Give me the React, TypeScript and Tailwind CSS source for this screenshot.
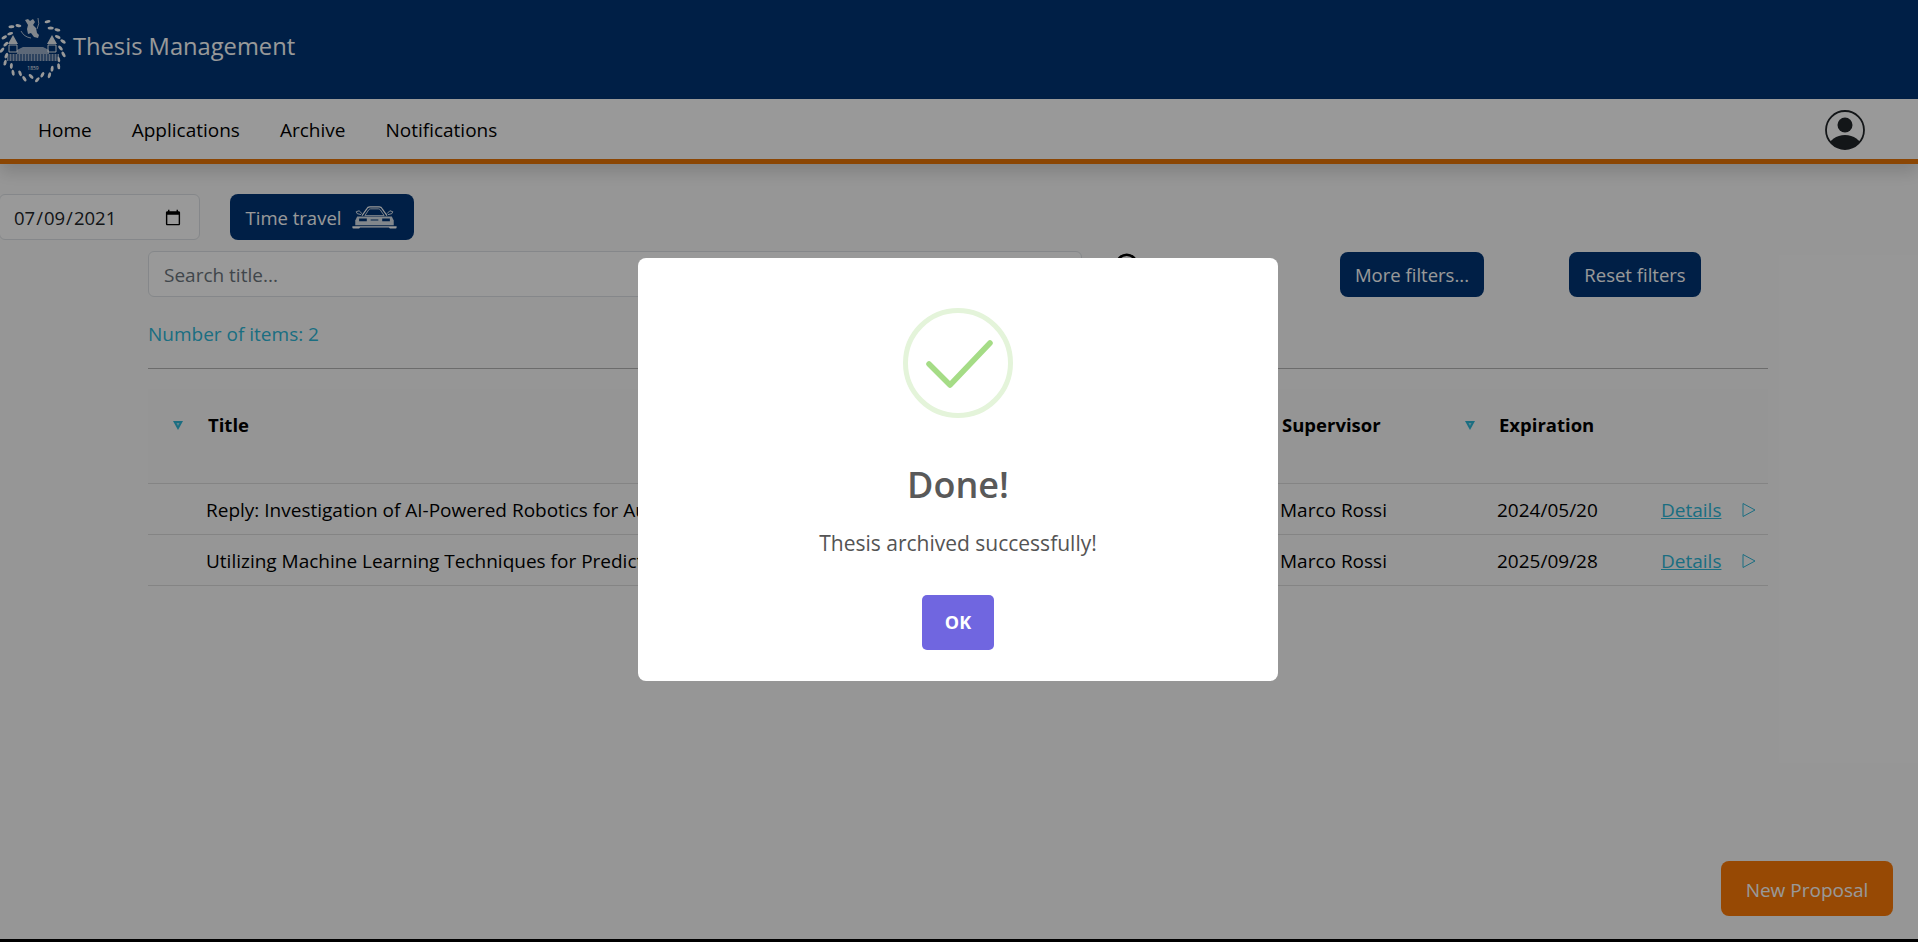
import { Search } from 'lucide-react';

const font = "font-['Open_Sans','Noto_Sans',sans-serif]";

function Logo() {
  // laurel wreath leaves around the seal
  const leaves = [];
  for (let a = -62; a <= 242; a += 12) {
    const r = (a * Math.PI) / 180;
    const side = (a + 62) % 24 === 0 ? 31 : 27.5;
    const tilt = a < 90 ? a + 50 : a - 50;
    const x = 33 + side * Math.cos(r);
    const y = 32 + side * Math.sin(r);
    leaves.push(
      <ellipse key={a} cx={x} cy={y} rx="3" ry="1.5" fill="#fff" transform={`rotate(${tilt} ${x} ${y})`} />
    );
  }
  return (
    <svg viewBox="0 0 66 66" className="w-[66px] h-[66px] shrink-0">
      {leaves}
      <path d="M25 3l3-1 2 2 3-2 2 3-2 3 3 3 1 5 2 2-1 3-4-1-3-4-3 1-1-5 1-4z" fill="#fff" opacity=".85" />
      <path d="M38 1q2 6-1 11M21 14q3 6 10 7" fill="none" stroke="#fff" strokeWidth=".7" />
      <path d="M8 27l5-9 5 9zM47 27l5-9 5 9z" fill="#fff" opacity=".9" />
      <path d="M9 28h8v7H9zM48 28h8v7h-8z" fill="none" stroke="#fff" strokeWidth=".9" />
      <path d="M17 33l6-3h20l6 3v4H17z" fill="#fff" opacity=".6" />
      <path d="M7 37h52v7H7z" fill="#fff" opacity=".6" />
      <path d="M9 37v7M12 37v7M15 37v7M18 37v7M21 37v7M24 37v7M27 37v7M30 37v7M33 37v7M36 37v7M39 37v7M42 37v7M45 37v7M48 37v7M51 37v7M54 37v7M57 37v7" stroke="#003576" strokeWidth="1" />
      <text x="33" y="53" textAnchor="middle" fontSize="5" fill="#fff">1859</text>
    </svg>
  );
}

function Car() {
  return (
    <svg viewBox="0 0 48 26" className="w-[47px] h-[25px] shrink-0" fill="none" stroke="#fff" strokeWidth="1.2">
      <path d="M11 11l5-7q1-2 3-2h10q2 0 3 2l5 7" />
      <path d="M14 11l4-6q1-1 2-1h8q1 0 2 1l4 6z" strokeWidth=".8" />
      <path d="M10 10l-4-1-1-2 3-1 3 3M38 10l4-1 1-2-3-1-3 3" strokeWidth=".9" />
      <path d="M6 12h36l2 4v5H4v-5z" fill="#fff" stroke="none" opacity=".85" />
      <path d="M8 14h8v3H8zM32 14h8v3h-8zM20 15h8v1h-8z" fill="#003576" stroke="none" />
      <path d="M1 22h46v1.5q0 1-1 1H40l-1-1H9l-1 1H2q-1 0-1-1z" fill="#fff" stroke="none" />
    </svg>
  );
}

function SortArrow() {
  return (
    <svg viewBox="0 0 10 10" className="w-[10px] h-[10px]">
      <path d="M0 1h10L5 10z" fill="#2db7d8" />
      <path d="M3.5 3h3L5 6z" fill="#a7dcea" />
    </svg>
  );
}

function Row({ title, date }: { title: string; date: string }) {
  return (
    <tr className="h-[51px] border-b border-[#dcdcdc] text-[19px] text-black">
      <td />
      <td className="pt-[3px] whitespace-nowrap">{title}</td>
      <td className="pt-[3px]">Marco Rossi</td>
      <td className="pt-[3px]">{date}</td>
      <td className="pt-[3px]">
        <div className="flex items-center pl-[2px]">
          <a className="text-[#2db7d8] underline">Details</a>
          <svg viewBox="0 0 14 16" className="ml-[21px] w-[14px] h-[16px]" fill="none" stroke="#2db7d8" strokeWidth="1">
            <path d="M1 1.5l12 6.5-12 6.5z" />
          </svg>
        </div>
      </td>
    </tr>
  );
}

export default function App() {
  return (
    <div className={`relative h-[942px] bg-black overflow-hidden ${font}`}>
      <div className="h-[939px] bg-[#fbfbfb] flex flex-col">
        <header className="h-[99px] bg-[#003576] flex items-center shrink-0">
          <Logo />
          <span className="ml-[7px] mb-[5px] text-[23.7px] text-white">Thesis Management</span>
        </header>

        <nav className="h-[65px] pt-[2px] bg-white border-b-[5px] border-[#e87508] shadow-[0_8px_16px_rgba(0,0,0,0.15)] flex items-center pl-[38px] pr-[53px] text-[19px] text-black shrink-0">
          <a>Home</a>
          <a className="ml-[40px]">Applications</a>
          <a className="ml-[40px]">Archive</a>
          <a className="ml-[40px]">Notifications</a>
          <svg viewBox="0 0 40 40" className="ml-auto w-[40px] h-[40px]">
            <defs>
              <clipPath id="avatarClip">
                <circle cx="20" cy="20" r="19" />
              </clipPath>
            </defs>
            <circle cx="20" cy="15" r="7.5" fill="#212529" />
            <ellipse cx="20" cy="37" rx="16" ry="12" fill="#212529" clipPath="url(#avatarClip)" />
            <circle cx="20" cy="20" r="19" fill="none" stroke="#212529" strokeWidth="1.8" />
          </svg>
        </nav>

        <div className="mt-[30px] flex items-center gap-[30px]">
          <input
            type="date"
            defaultValue="2021-07-09"
            className="w-[201px] h-[46px] pt-[2px] pl-[13px] pr-[15px] -ml-[1px] rounded-[6px] border border-[#dee2e6] text-[18.5px] text-[#212529] bg-white"
          />
          <button className="w-[184px] h-[46px] pt-[1px] rounded-[8px] bg-[#003576] text-white text-[18.5px] flex items-center justify-center gap-[10px]">
            Time travel
            <Car />
          </button>
        </div>

        <div className="mt-[11px] ml-[148px] flex items-center">
          <input
            placeholder="Search title..."
            className="w-[934px] h-[46px] pt-[2px] px-[15px] rounded-[6px] border border-[#dee2e6] text-[19px] text-[#212529] placeholder:text-[#6c757d] bg-white"
          />
          <Search className="self-start ml-[31px] w-[30px] h-[30px] text-black" strokeWidth={2} />
          <button className="ml-[197px] w-[144px] h-[45px] pt-[1px] rounded-[8px] bg-[#003576] text-white text-[18.5px]">More filters...</button>
          <button className="ml-[85px] w-[132px] h-[45px] pt-[1px] rounded-[8px] bg-[#003576] text-white text-[18.5px]">Reset filters</button>
        </div>

        <div className="ml-[148px] mt-[24px] text-[19px] leading-[26px] text-[#2db7d8]">Number of items: 2</div>
        <div className="ml-[148px] mr-[150px] mt-[21px] h-px bg-[#b5b5b5]" />

        <table className="ml-[148px] mt-[20px] w-[1620px] table-fixed border-collapse">
          <colgroup>
            <col className="w-[58px]" />
            <col className="w-[1074px]" />
            <col className="w-[217px]" />
            <col className="w-[162px]" />
            <col className="w-[109px]" />
          </colgroup>
          <thead>
            <tr className="h-[94px] bg-[#f8f8f8] border-b border-[#dcdcdc] text-[18.5px] font-bold text-black text-left">
              <th className="pb-[21px] pl-[25px] font-bold"><SortArrow /></th>
              <th className="pb-[21px] pl-[2px] font-bold">Title</th>
              <th className="pb-[21px] pl-[2px] font-bold">
                <div className="flex items-center justify-between pr-[22px]">
                  Supervisor
                  <SortArrow />
                </div>
              </th>
              <th className="pb-[21px] pl-[2px] font-bold">Expiration</th>
              <th />
            </tr>
          </thead>
          <tbody>
            <Row title="Reply: Investigation of AI-Powered Robotics for Autonomous Systems" date="2024/05/20" />
            <Row title="Utilizing Machine Learning Techniques for Predictive Maintenance" date="2025/09/28" />
          </tbody>
        </table>
      </div>

      <button className="absolute left-[1721px] top-[861px] w-[172px] h-[55px] pt-[3px] rounded-[8px] bg-[#fc7a08] text-white text-[19px]">New Proposal</button>

      {/* success dialog */}
      <div className="absolute inset-0 bg-black/40 flex items-start justify-center">
        <div className="mt-[258px] mr-[2px] w-[640px] h-[423px] rounded-[8px] bg-white flex flex-col items-center">
          <svg viewBox="0 0 110 110" className="mt-[50px] w-[110px] h-[110px]" fill="none">
            <circle cx="55" cy="55" r="52.5" stroke="#e4f4da" strokeWidth="5" />
            <path d="M26 56l21 21 40-42" stroke="#a5dc86" strokeWidth="5.5" strokeLinecap="round" strokeLinejoin="round" />
          </svg>
          <h2 className="mt-[43px] text-[36px] leading-[48px] font-semibold text-[#595959]">Done!</h2>
          <p className="mt-[20px] text-[21px] leading-[28px] text-[#545454]">Thesis archived successfully!</p>
          <button className="mt-[38px] w-[72px] h-[55px] rounded-[5px] bg-[#7066e0] text-white text-[18px] font-bold">OK</button>
        </div>
      </div>
    </div>
  );
}
